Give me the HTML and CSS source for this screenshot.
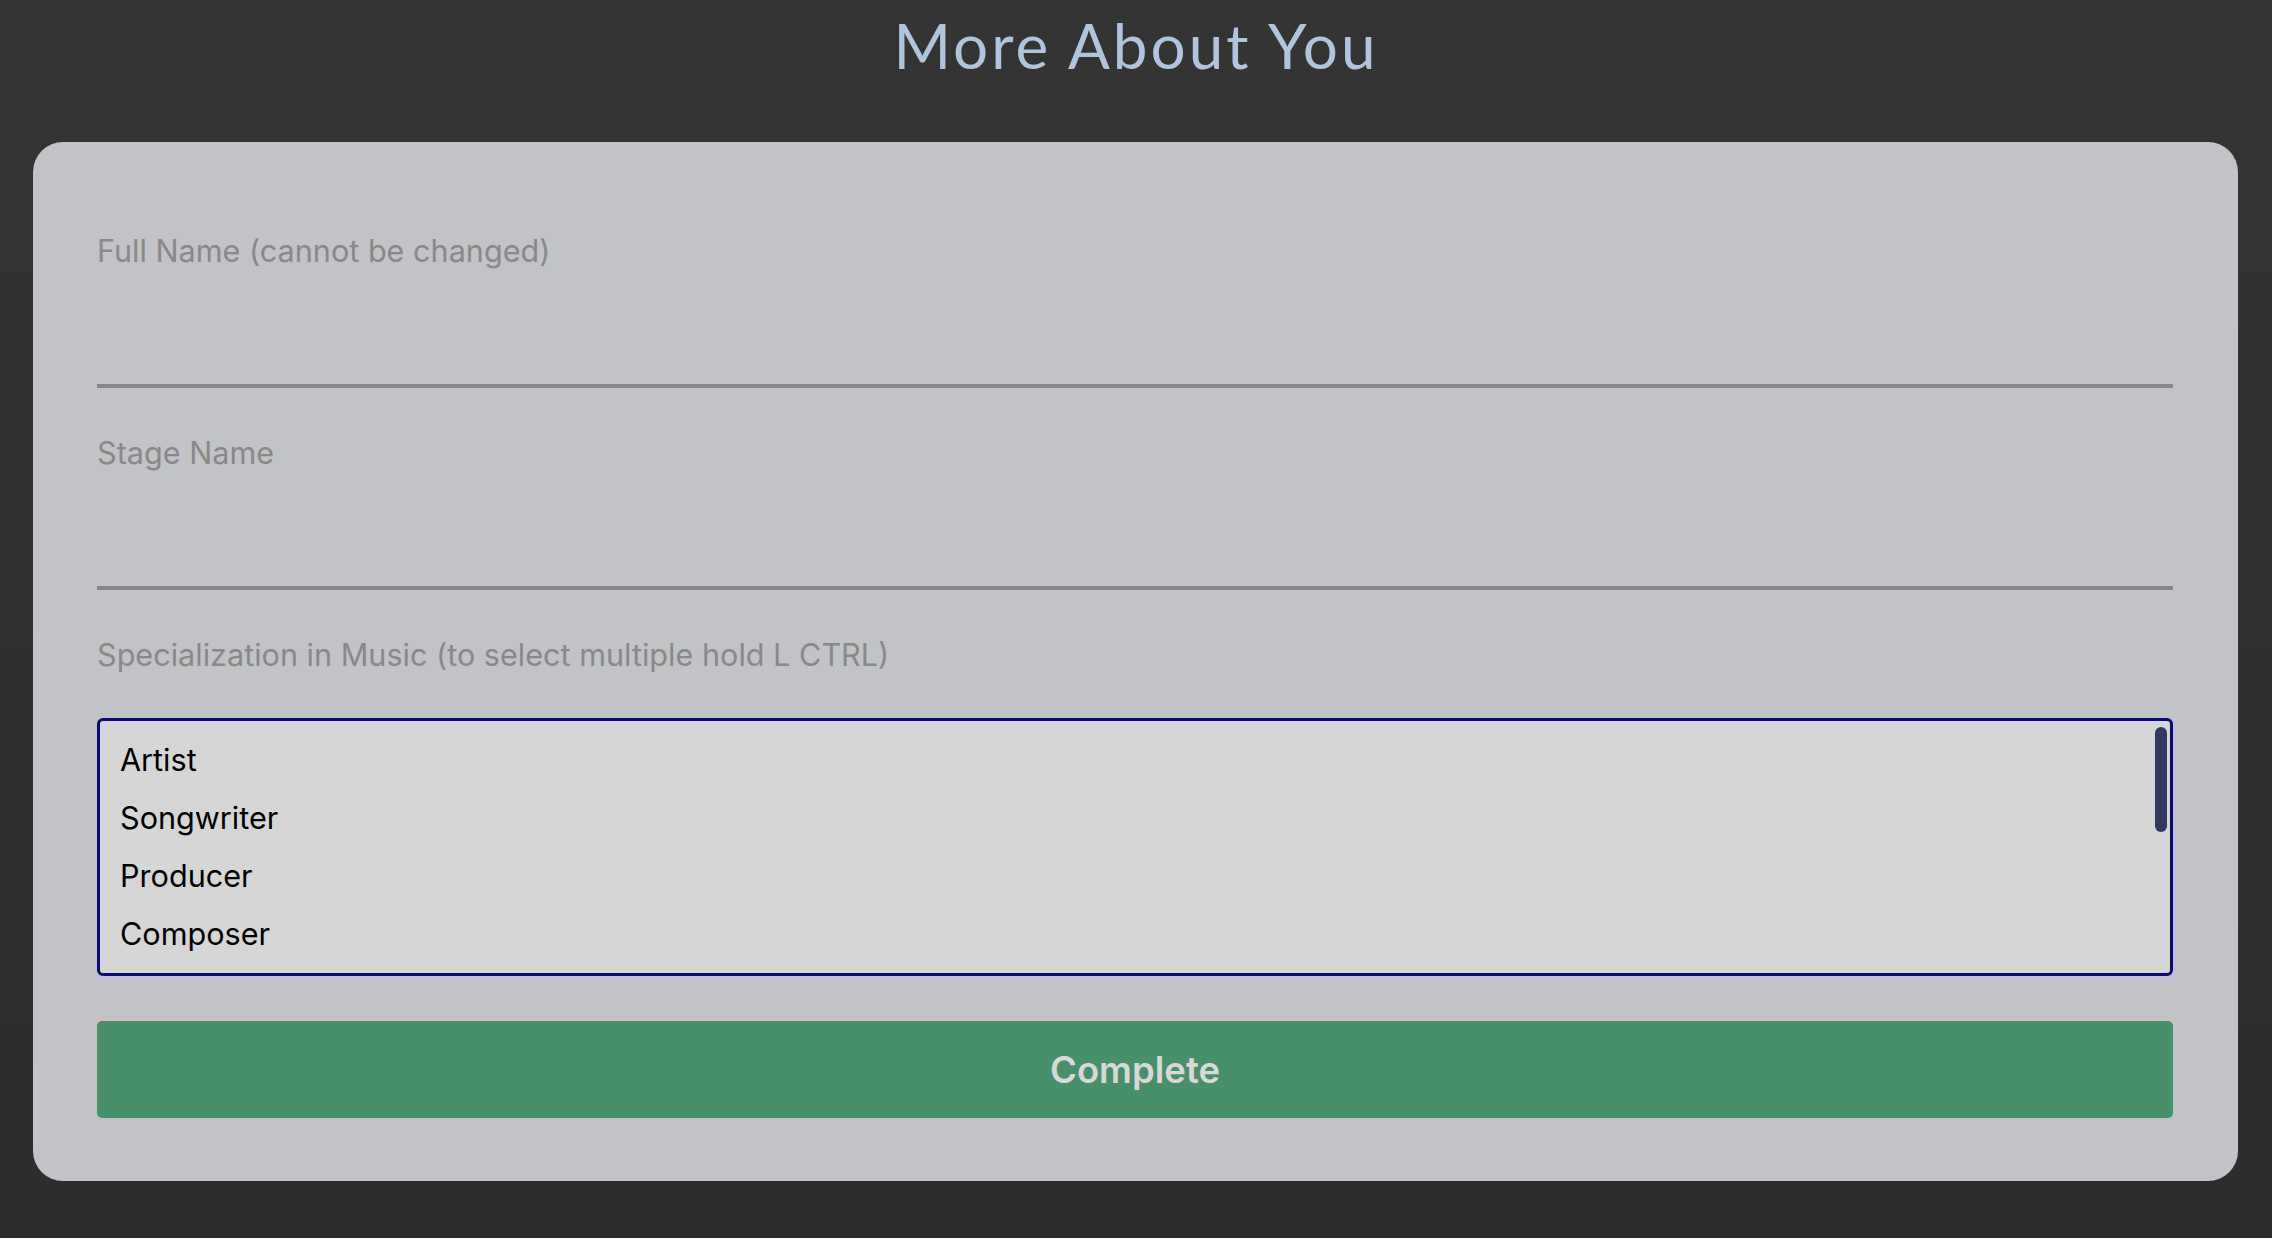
FILE: index.html
```html
<!DOCTYPE html>
<html lang="en">
<head>
<meta charset="utf-8">
<title>More About You</title>
<link rel="stylesheet" href="styles.css">
</head>
<body>
<h1 class="page-title">More About You</h1>
<form class="card">
  <div class="field">
    <label class="field-label" for="fullname">Full Name (cannot be changed)</label>
    <input class="text-input" id="fullname" type="text" readonly>
  </div>
  <div class="field">
    <label class="field-label" for="stagename">Stage Name</label>
    <input class="text-input" id="stagename" type="text">
  </div>
  <div class="field field-last">
    <label class="field-label">Specialization in Music (to select multiple hold L CTRL)</label>
    <div class="multi-select" role="listbox" aria-multiselectable="true">
      <div class="option" role="option">Artist</div>
      <div class="option" role="option">Songwriter</div>
      <div class="option" role="option">Producer</div>
      <div class="option" role="option">Composer</div>
      <span class="scroll-thumb" aria-hidden="true"></span>
    </div>
  </div>
  <button class="submit" type="button">Complete</button>
</form>
</body>
</html>
```

FILE: styles.css
```css
html, body {
  margin: 0;
  padding: 0;
}

body {
  min-height: 100vh;
  background: linear-gradient(#343434, #2d2d2d);
  font-family: Inter, "Noto Sans", "Liberation Sans", sans-serif;
  overflow: hidden;
}

.page-title {
  margin: 8px 0 0;
  font-family: Lato, "Noto Sans", sans-serif;
  font-weight: 400;
  font-size: 62px;
  line-height: 74px;
  letter-spacing: 3px;
  text-align: center;
  color: #b0c4de;
}

.card {
  margin: 60px 34px 0 33px;
  padding: 92px 65px 63px 64px;
  background: #c2c3c7;
  border-radius: 30px;
}

.field {
  margin-bottom: 48px;
}

.field-last {
  margin-bottom: 45px;
}

.field-label {
  display: block;
  font-size: 30.6px;
  line-height: 34px;
  margin-bottom: 2px;
  color: #898989;
}

.text-input {
  display: block;
  width: 100%;
  height: 118px;
  box-sizing: border-box;
  margin: 0;
  padding: 0;
  border: none;
  border-bottom: 4px solid #888888;
  background: transparent;
  outline: none;
  font: inherit;
  font-size: 30px;
}

.multi-select {
  position: relative;
  margin-top: 46px;
  height: 258px;
  box-sizing: border-box;
  border: 3px solid #0a0a7a;
  border-radius: 6px;
  background: #d6d6d6;
  padding: 10px 0;
  overflow: hidden;
}

.scroll-thumb {
  position: absolute;
  top: 6px;
  right: 3px;
  width: 12px;
  height: 105px;
  border-radius: 6px;
  background: #313a5e;
}

.option {
  padding: 11px 20px;
  font-size: 30.6px;
  line-height: 36px;
  color: #000;
}

.submit {
  display: block;
  width: 100%;
  height: 97px;
  margin: 0;
  border: none;
  border-radius: 5px;
  background: #47906a;
  color: #d8d8d8;
  font-family: Inter, "Noto Sans", sans-serif;
  font-weight: 600;
  font-size: 36.5px;
  cursor: pointer;
}
```
